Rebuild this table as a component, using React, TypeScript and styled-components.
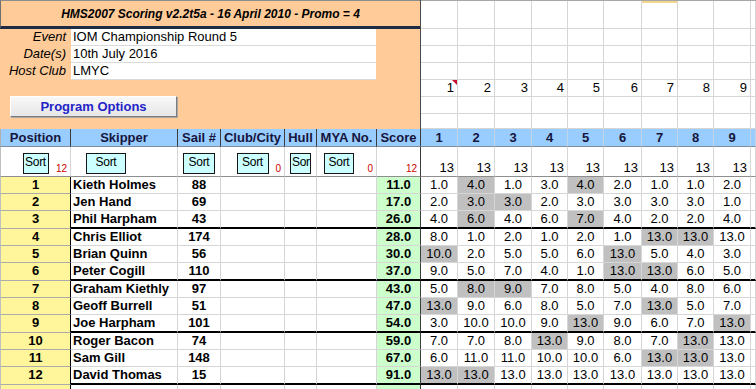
import React from "react";
import styled, { createGlobalStyle, css } from "styled-components";

const GlobalStyle = createGlobalStyle`
  html, body { margin: 0; padding: 0; background: #ffffff; }
  body { font-family: "Liberation Sans", Arial, sans-serif; font-size: 13px; color: #000; }
  * { box-sizing: border-box; }
`;

const RACE_W = [37, 37, 37, 36, 36, 38, 36, 36, 37];
const raceCols = RACE_W.map((w) => `${w}px`).join(" ");

type Row = { name: string; sail: string; score: string; r: string[]; d: number[] };

const ROWS: Row[] = [
  { name: "Kieth Holmes", sail: "88", score: "11.0", r: ["1.0", "4.0", "1.0", "3.0", "4.0", "2.0", "1.0", "1.0", "2.0"], d: [1, 4] },
  { name: "Jen Hand", sail: "69", score: "17.0", r: ["2.0", "3.0", "3.0", "2.0", "3.0", "3.0", "3.0", "3.0", "1.0"], d: [1, 2] },
  { name: "Phil Harpham", sail: "43", score: "26.0", r: ["4.0", "6.0", "4.0", "6.0", "7.0", "4.0", "2.0", "2.0", "4.0"], d: [1, 4] },
  { name: "Chris Elliot", sail: "174", score: "28.0", r: ["8.0", "1.0", "2.0", "1.0", "2.0", "1.0", "13.0", "13.0", "13.0"], d: [6, 7] },
  { name: "Brian Quinn", sail: "56", score: "30.0", r: ["10.0", "2.0", "5.0", "5.0", "6.0", "13.0", "5.0", "4.0", "3.0"], d: [0, 5] },
  { name: "Peter Cogill", sail: "110", score: "37.0", r: ["9.0", "5.0", "7.0", "4.0", "1.0", "13.0", "13.0", "6.0", "5.0"], d: [5, 6] },
  { name: "Graham Kiethly", sail: "97", score: "43.0", r: ["5.0", "8.0", "9.0", "7.0", "8.0", "5.0", "4.0", "8.0", "6.0"], d: [1, 2] },
  { name: "Geoff Burrell", sail: "51", score: "47.0", r: ["13.0", "9.0", "6.0", "8.0", "5.0", "7.0", "13.0", "5.0", "7.0"], d: [0, 6] },
  { name: "Joe Harpham", sail: "101", score: "54.0", r: ["3.0", "10.0", "10.0", "9.0", "13.0", "9.0", "6.0", "7.0", "13.0"], d: [4, 8] },
  { name: "Roger Bacon", sail: "74", score: "59.0", r: ["7.0", "7.0", "8.0", "13.0", "9.0", "8.0", "7.0", "13.0", "13.0"], d: [3, 7] },
  { name: "Sam Gill", sail: "148", score: "67.0", r: ["6.0", "11.0", "11.0", "10.0", "10.0", "6.0", "13.0", "13.0", "13.0"], d: [6, 7] },
  { name: "David Thomas", sail: "15", score: "91.0", r: ["13.0", "13.0", "13.0", "13.0", "13.0", "13.0", "13.0", "13.0", "13.0"], d: [0, 1] },
];

const dataRowHeights = ROWS.map((_, i) => (i % 3 === 2 ? "18px" : "17px")).join(" ");

const GRID = "#d6d6d6";
const DARK = "#3c3c3c";

const Sheet = styled.div`
  width: 756px;
  height: 389px;
  overflow: hidden;
  background: #fff;
`;

const Top = styled.div`
  display: flex;
  height: 129px;
`;

const InfoPanel = styled.div`
  width: 421px;
  flex: none;
  background: #ffcc99;
  border-right: 1px solid #4a4a4a;
  display: flex;
  flex-direction: column;
`;

const TitleBar = styled.div`
  height: 29px;
  border-top: 1px solid #8c8c8c;
  border-left: 1px solid #6e6e6e;
  border-bottom: 3px solid #1d2b44;
  display: flex;
  align-items: center;
  justify-content: center;
  font-weight: bold;
  font-style: italic;
  font-size: 12px;
`;

const InfoRow = styled.div`
  display: flex;
  height: 17px;
`;

const InfoLabel = styled.div`
  width: 71px;
  padding-right: 5px;
  text-align: right;
  font-style: italic;
  font-size: 13px;
  line-height: 16px;
`;

const InfoValue = styled.div`
  width: 305px;
  background: #fff;
  border-bottom: 1px solid #dadada;
  padding-left: 2px;
  font-size: 13px;
  line-height: 16px;
`;

const ProgramButton = styled.div`
  margin: 16px 0 0 10px;
  width: 167px;
  height: 21px;
  background: linear-gradient(#f8f8f8, #e6e6e6);
  border: 1px solid;
  border-color: #ffffff #7c7c7c #7c7c7c #ffffff;
  box-shadow: 1px 1px 0 #a8a8a8;
  color: #2323c8;
  font-weight: bold;
  font-size: 13px;
  line-height: 19px;
  text-align: center;
`;

const RaceGrid = styled.div`
  flex: 1;
  display: grid;
  grid-template-columns: ${raceCols} 1fr;
  grid-template-rows: 28px 17px 17px 17px 17px 17px 15px;
  border-top: 1px solid #a6a6a6;
`;

const GridCell = styled.div<{ $mark?: boolean }>`
  position: relative;
  border-right: 1px solid ${GRID};
  border-bottom: 1px solid ${GRID};
  text-align: right;
  padding-right: 3px;
  font-size: 13px;
  line-height: 16px;
  ${(p) => p.$mark && css`box-shadow: inset 0 2px 0 #f1d88c;`}
`;

const CommentMark = styled.span`
  position: absolute;
  top: 0;
  right: 0;
  width: 0;
  height: 0;
  border-top: 5px solid #c8102e;
  border-left: 5px solid transparent;
`;

const Table = styled.div`
  display: grid;
  grid-template-columns: 71px 107px 43px 64px 32px 60px 44px ${raceCols} 1fr;
  grid-template-rows: 18px 30px ${dataRowHeights} 17px;
`;

const HeadCell = styled.div<{ $rb: string; $first?: boolean }>`
  background: #99ccff;
  color: #15153d;
  font-weight: bold;
  font-size: 13px;
  line-height: 17px;
  text-align: center;
  white-space: nowrap;
  border-right: 1px solid ${(p) => p.$rb};
  border-bottom: 1px solid #7e8ea0;
  ${(p) => p.$first && css`border-left: 1px solid #b0b0b0;`}
`;

const SortCell = styled.div<{ $rb: string; $first?: boolean }>`
  display: grid;
  grid-template-areas: "c";
  background: #fff;
  border-right: 1px solid ${(p) => p.$rb};
  border-bottom: 1px solid #8e8e8e;
  ${(p) => p.$first && css`border-left: 1px solid #c0c0c0;`}
`;

const SortButton = styled.div<{ $w: number; $ml?: number }>`
  grid-area: c;
  align-self: start;
  justify-self: ${(p) => (p.$ml != null ? "start" : "center")};
  margin: 6px 0 0 ${(p) => p.$ml ?? 0}px;
  width: ${(p) => p.$w}px;
  height: 21px;
  background: #ccffff;
  border: 1px solid #151515;
  padding: 0 1px;
  font-size: 12px;
  letter-spacing: -0.3px;
  line-height: 17px;
  text-align: center;
  white-space: nowrap;
`;

const Count = styled.span`
  grid-area: c;
  align-self: end;
  justify-self: end;
  color: #cc0000;
  font-size: 10px;
  line-height: 12px;
  padding: 0 3px 1px 0;
`;

const RaceCount = styled.span`
  grid-area: c;
  align-self: end;
  justify-self: end;
  font-size: 13px;
  line-height: 15px;
  padding: 0 3px 1px 0;
`;

const bodyCell = css<{ $end?: boolean }>`
  font-size: 13px;
  line-height: 16px;
  white-space: nowrap;
  border-bottom: ${(p) => (p.$end ? "2px solid #000" : `1px solid ${GRID}`)};
`;

const PosCell = styled.div`
  background: #fff59a;
  font-weight: bold;
  text-align: center;
  font-size: 13px;
  line-height: 16px;
  border-left: 1px solid #c0c0c0;
  border-right: 1px solid #000;
  border-bottom: 1px solid #ababab;
`;

const NameCell = styled.div<{ $end?: boolean }>`
  ${bodyCell};
  font-weight: bold;
  padding-left: 2px;
  border-right: 1px solid ${GRID};
`;

const SailCell = styled.div<{ $end?: boolean }>`
  ${bodyCell};
  font-weight: bold;
  text-align: center;
  border-right: 1px solid ${GRID};
`;

const EmptyCell = styled.div<{ $end?: boolean }>`
  ${bodyCell};
  border-right: 1px solid ${GRID};
`;

const ScoreCell = styled.div<{ $end?: boolean }>`
  ${bodyCell};
  background: #ccffcc;
  font-weight: bold;
  text-align: center;
  border-right: 1px solid ${DARK};
`;

const RaceCell = styled.div<{ $end?: boolean; $drop?: boolean }>`
  ${bodyCell};
  text-align: center;
  background: ${(p) => (p.$drop ? "#c0c0c0" : "#fff")};
  border-right: 1px solid ${GRID};
`;

const HEADERS = ["Position", "Skipper", "Sail #", "Club/City", "Hull", "MYA No.", "Score"];

export default function App() {
  return (
    <Sheet>
      <GlobalStyle />
      <Top>
        <InfoPanel>
          <TitleBar>HMS2007 Scoring v2.2t5a - 16 April 2010 - Promo = 4</TitleBar>
          <InfoRow>
            <InfoLabel>Event</InfoLabel>
            <InfoValue>IOM Championship Round 5</InfoValue>
          </InfoRow>
          <InfoRow>
            <InfoLabel>Date(s)</InfoLabel>
            <InfoValue>10th July 2016</InfoValue>
          </InfoRow>
          <InfoRow>
            <InfoLabel>Host Club</InfoLabel>
            <InfoValue>LMYC</InfoValue>
          </InfoRow>
          <ProgramButton>Program Options</ProgramButton>
        </InfoPanel>
        <RaceGrid>
          {Array.from({ length: 7 }).map((_, r) =>
            Array.from({ length: 10 }).map((__, c) => (
              <GridCell key={`${r}-${c}`} $mark={r === 0 && c === 6}>
                {r === 4 && c < 9 ? String(c + 1) : ""}
                {r === 4 && c === 0 ? <CommentMark /> : null}
              </GridCell>
            ))
          )}
        </RaceGrid>
      </Top>
      <Table>
        {HEADERS.map((h, i) => (
          <HeadCell key={h} $rb={DARK} $first={i === 0}>
            {h}
          </HeadCell>
        ))}
        {RACE_W.map((_, i) => (
          <HeadCell key={`h${i}`} $rb="#c4d4e8">
            {i + 1}
          </HeadCell>
        ))}
        <HeadCell $rb="#c4d4e8" />

        <SortCell $rb={GRID} $first>
          <SortButton $w={26}>Sort</SortButton>
          <Count>12</Count>
        </SortCell>
        <SortCell $rb={GRID}>
          <SortButton $w={40} $ml={15}>Sort</SortButton>
        </SortCell>
        <SortCell $rb={GRID}>
          <SortButton $w={32}>Sort</SortButton>
        </SortCell>
        <SortCell $rb={GRID}>
          <SortButton $w={32}>Sort</SortButton>
          <Count>0</Count>
        </SortCell>
        <SortCell $rb={GRID}>
          <SortButton $w={21}>Sor</SortButton>
        </SortCell>
        <SortCell $rb={GRID}>
          <SortButton $w={30} $ml={7}>Sort</SortButton>
          <Count>0</Count>
        </SortCell>
        <SortCell $rb={DARK}>
          <Count>12</Count>
        </SortCell>
        {RACE_W.map((_, i) => (
          <SortCell key={`s${i}`} $rb={GRID}>
            <RaceCount>13</RaceCount>
          </SortCell>
        ))}
        <SortCell $rb={GRID} />

        {ROWS.map((row, i) => {
          const end = i % 3 === 2;
          return (
            <React.Fragment key={row.name}>
              <PosCell>{i + 1}</PosCell>
              <NameCell $end={end}>{row.name}</NameCell>
              <SailCell $end={end}>{row.sail}</SailCell>
              <EmptyCell $end={end} />
              <EmptyCell $end={end} />
              <EmptyCell $end={end} />
              <ScoreCell $end={end}>{row.score}</ScoreCell>
              {row.r.map((v, j) => (
                <RaceCell key={j} $end={end} $drop={row.d.includes(j)}>
                  {v}
                </RaceCell>
              ))}
              <EmptyCell $end={end} />
            </React.Fragment>
          );
        })}

        <PosCell />
        <EmptyCell />
        <EmptyCell />
        <EmptyCell />
        <EmptyCell />
        <EmptyCell />
        <ScoreCell />
        {RACE_W.map((_, i) => (
          <RaceCell key={`e${i}`} />
        ))}
        <EmptyCell />
      </Table>
    </Sheet>
  );
}
